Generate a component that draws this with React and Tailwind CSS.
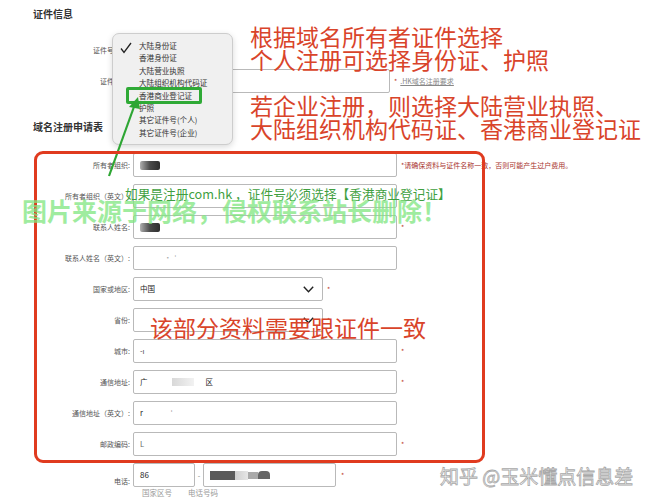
import React from "react";

function Label({ children }) {
  return (
    <div className="w-[130px] shrink-0 text-right text-[7px] leading-[10px] text-[#555] whitespace-nowrap">
      {children}
    </div>
  );
}

function Box({ w, children, className = "" }) {
  return (
    <div
      className={`h-[24px] shrink-0 border border-[#b9b9b9] rounded-[2px] bg-white flex items-center px-[6px] text-[7.5px] text-[#222] ${className}`}
      style={{ width: w }}
    >
      {children}
    </div>
  );
}

function Star({ className = "" }) {
  return <span className={`text-[7px] leading-[10px] text-[#c0392b] ${className}`}>*</span>;
}

function Chevron() {
  return (
    <svg width="11" height="7" viewBox="0 0 11 7" className="ml-auto mr-[2px]">
      <polyline points="0.8,0.8 5.5,5.8 10.2,0.8" fill="none" stroke="#222" strokeWidth="1.4" />
    </svg>
  );
}

function Blob() {
  return <span className="block w-[20px] h-[9px] rounded-[2px] bg-gradient-to-r from-[#b0b0b0] via-[#4a4a4a] to-[#2e2e2e]" />;
}

function Row({ label, children }) {
  return (
    <div className="flex items-center gap-[3px] h-[24px]">
      <Label>{label}</Label>
      {children}
    </div>
  );
}

export default function App() {
  return (
    <div className="relative w-[650px] h-[500px] overflow-hidden bg-white font-['Noto_Sans_CJK_SC','Noto_Sans',sans-serif]">
      {/* ---------- page flow ---------- */}
      <div className="pl-[33px] pt-[8px]">
        <h2 className="text-[10px] leading-[12px] font-bold text-[#333]">证件信息</h2>
      </div>

      <div className="mt-[18px] flex flex-col gap-[7px]">
        <Row label="证件号类型:">
          <Box w="100px">大陆身份证</Box>
        </Row>
        <Row label="证件号码:">
          <Box w="257px" />
          <span className="ml-[1px] flex items-center gap-[3px] text-[7px] leading-[10px]">
            <span className="text-[#c0392b]">*</span>
            <span className="text-[#888] underline">.HK域名注册要求</span>
          </span>
        </Row>
      </div>

      <div className="pl-[33px] mt-[28px]">
        <h2 className="text-[10px] leading-[12px] font-bold text-[#333]">域名注册申请表</h2>
      </div>

      <div className="mt-[20px] flex flex-col gap-[7px]">
        <Row label="所有者组织:">
          <Box w="264px">
            <Blob />
          </Box>
          <span className="ml-[1px] text-[7px] leading-[10px] text-[#a8322d] whitespace-nowrap">
            *请确保资料与证件名称一致，否则可能产生过户费用。
          </span>
        </Row>
        <Row label="所有者组织（英文）:">
          <Box w="264px" />
        </Row>
        <Row label="联系人姓名:">
          <Box w="264px">
            <Blob />
          </Box>
          <Star className="ml-[1px]" />
        </Row>
        <Row label="联系人姓名（英文）:">
          <Box w="264px">
            <span className="ml-[24px] text-[#aaa]">·&nbsp;&nbsp;ˈ</span>
          </Box>
        </Row>
        <Row label="国家或地区:">
          <Box w="190px">
            <span>中国</span>
            <Chevron />
          </Box>
          <Star className="ml-[1px]" />
        </Row>
        <Row label="省份:">
          <Box w="190px">
            <Chevron />
          </Box>
          <Star className="ml-[1px]" />
        </Row>
        <Row label="城市:">
          <Box w="264px">
            <span className="text-[#444]">-ı</span>
          </Box>
          <Star className="ml-[1px]" />
        </Row>
        <Row label="通信地址:">
          <Box w="264px">
            <span>广</span>
            <span className="ml-[24px] block w-[22px] h-[8px] bg-gradient-to-r from-[#d8d8d8] to-[#f2f2f2]" />
            <span className="ml-[12px]">区</span>
          </Box>
          <Star className="ml-[1px]" />
        </Row>
        <Row label="通信地址（英文）:">
          <Box w="264px">
            <span>r</span>
            <span className="ml-[28px] text-[#999]">ˈ</span>
          </Box>
        </Row>
        <Row label="邮政编码:">
          <Box w="264px">
            <span className="text-[#666]">L</span>
          </Box>
          <Star className="ml-[1px]" />
        </Row>
        <div className="flex items-center gap-[3px]">
          <Label>电话:</Label>
          <div className="flex flex-col">
            <div className="flex items-center">
              <Box w="62px" className="text-[8px]">86</Box>
              <span className="w-[8px] text-center text-[7px] text-[#777]">-</span>
              <Box w="133px">
                <span className="block w-[25px] h-[9px] bg-[#5a5a5a]" />
                <span className="block w-[13px] h-[9px] bg-gradient-to-r from-[#cfcfcf] to-[#e6e6e6]" />
                <span className="block w-[10px] h-[7px] bg-[#aaa]" />
                <span className="block w-[12px] h-[8px] rounded-t-[4px] bg-[#666]" />
              </Box>
              <Star className="ml-[5px]" />
            </div>
            <div className="flex gap-[16px] pl-[9px] text-[7.5px] leading-[12px] text-[#999]">
              <span>国家区号</span>
              <span>电话号码</span>
            </div>
          </div>
        </div>
      </div>

      {/* ---------- overlays ---------- */}
      {/* native select popup */}
      <div className="absolute left-[112px] top-[33px] w-[121px] h-[112px] rounded-[7px] border border-[#cdcdcd] bg-[#f0f0f0] shadow-[0_2px_6px_rgba(0,0,0,0.15)] pl-[26px] pt-[6px] text-[7.6px] leading-[12.4px] text-[#333]">
        <svg width="12" height="12" viewBox="0 0 12 12" className="absolute left-[7px] top-[8px]">
          <path d="M1 6.5 L4 10.5 L11 1" fill="none" stroke="#222" strokeWidth="1.3" />
        </svg>
        <div>大陆身份证</div>
        <div>香港身份证</div>
        <div>大陆营业执照</div>
        <div>大陆组织机构代码证</div>
        <div>香港商业登记证</div>
        <div>护照</div>
        <div>其它证件号(个人)</div>
        <div>其它证件号(企业)</div>
      </div>

      {/* green highlight box */}
      <div className="absolute left-[126px] top-[87px] w-[76px] h-[17px] border-[3px] border-[#2faa36] rounded-[2px]" />

      {/* green arrow */}
      <svg className="absolute left-0 top-0" width="650" height="500" viewBox="0 0 650 500">
        <line x1="109" y1="176" x2="135" y2="104" stroke="#2ea634" strokeWidth="2.2" />
        <polygon points="138,97 129,107 140,109" fill="#2ea634" />
      </svg>

      {/* red frame */}
      <div className="absolute left-[34px] top-[151px] w-[451px] h-[312px] border-[3.5px] border-[#e03b1f] rounded-[9px]" />

      {/* red notes */}
      <div className="absolute left-[250px] top-[25px] text-[23px] leading-[23px] text-[#d9442a] whitespace-nowrap">
        <div>根据域名所有者证件选择</div>
        <div>个人注册可选择身份证、护照</div>
      </div>
      <div className="absolute left-[250px] top-[94px] text-[23px] leading-[23px] text-[#d9442a] whitespace-nowrap">
        <div>若企业注册，则选择大陆营业执照、</div>
        <div>大陆组织机构代码证、香港商业登记证</div>
      </div>
      <div className="absolute left-[150px] top-[316px] text-[23px] leading-[23px] text-[#d9442a] whitespace-nowrap">
        该部分资料需要跟证件一致
      </div>

      {/* green note */}
      <div className="absolute left-[125px] top-[186px] text-[12.7px] leading-[16px] text-[#3f9f3f] whitespace-nowrap">
        如果是注册com.hk ，证件号必须选择【香港商业登记证】
      </div>

      {/* watermark */}
      <div className="absolute left-[22px] top-[197px] text-[25px] leading-[26px] font-bold text-[#7fe67f] opacity-75 whitespace-nowrap">
        图片来源于网络，侵权联系站长删除！
      </div>

      {/* zhihu mark */}
      <div className="absolute left-[440px] top-[465px] text-[19px] leading-[22px] text-white [-webkit-text-stroke:0.8px_#a8a8a8] whitespace-nowrap">
        知乎 @玉米懂点信息差
      </div>
    </div>
  );
}
